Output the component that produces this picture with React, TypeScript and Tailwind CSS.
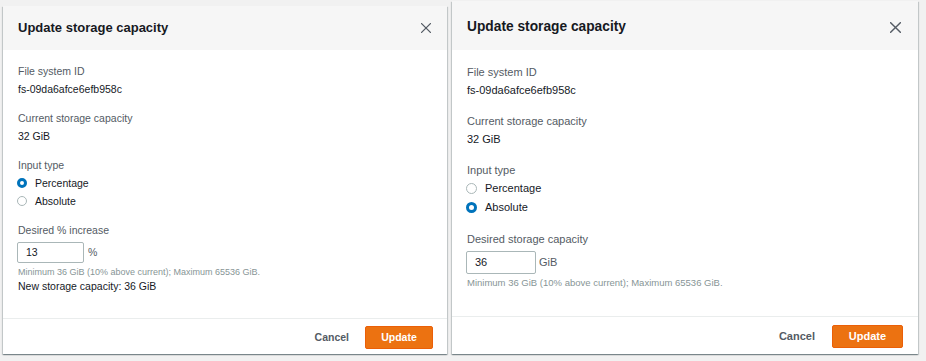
import React from "react";

type Cfg = {
  panel: string;
  header: string;
  title: string;
  close: number;
  body: string;
  line: string;
  radioLine: string;
  gap: string;
  radio: string;
  radioOn: string;
  radioGap: string;
  input: string;
  unit: string;
  hint: string;
  extra: string;
  footer: string;
  cancel: string;
  update: string;
};

const L: Cfg = {
  panel: "mt-[6px] w-[444px] h-[348px]",
  header: "h-[44px] pl-[15px] pr-[16px]",
  title: "text-[13px]",
  close: 10,
  body: "pl-[14px] pt-[12px] text-[10.5px]",
  line: "h-[18px] leading-[18px]",
  radioLine: "h-[18px] leading-[18px]",
  gap: "mt-[11px]",
  radio: "w-[10px] h-[10px]",
  radioOn: "border-[3px]",
  radioGap: "gap-[8px]",
  input: "w-[67px] h-[21px] pl-[8px]",
  unit: "ml-[4px]",
  hint: "mt-[3px] h-[12px] leading-[12px] text-[9px]",
  extra: "h-[16px] leading-[16px] text-[10.5px]",
  footer: "h-[36px] pt-[7px] pr-[14px] gap-[16px]",
  cancel: "text-[10.5px]",
  update: "w-[68px] h-[23px] text-[10.5px]",
};

const R: Cfg = {
  panel: "mt-[1px] w-[466px] h-[353px]",
  header: "h-[49px] pt-[3px] pl-[15px] pr-[17px]",
  title: "text-[13.75px]",
  close: 11,
  body: "pl-[14px] pt-[13px] text-[11px]",
  line: "h-[18px] leading-[18px]",
  radioLine: "h-[19px] leading-[19px]",
  gap: "mt-[13px]",
  radio: "w-[11px] h-[11px]",
  radioOn: "border-[3.5px]",
  radioGap: "gap-[8px]",
  input: "w-[70px] h-[23px] pl-[8px]",
  unit: "ml-[3px]",
  hint: "mt-[3px] h-[12px] leading-[12px] text-[9.5px]",
  extra: "",
  footer: "h-[38px] pt-[8px] pr-[15px] gap-[17px]",
  cancel: "text-[11px]",
  update: "w-[71px] h-[23px] text-[11px]",
};

function CloseIcon({ size }: { size: number }) {
  return (
    <svg width={size} height={size} viewBox="0 0 10 10" fill="none">
      <path d="M0.6 0.6 L9.4 9.4 M9.4 0.6 L0.6 9.4" stroke="#545b64" strokeWidth="1.3" strokeLinecap="round" />
    </svg>
  );
}

function Radio({ c, on, label }: { c: Cfg; on: boolean; label: string }) {
  return (
    <div className={`flex items-center ${c.radioGap} ${c.radioLine}`}>
      <span
        className={`${c.radio} rounded-full box-border ${
          on ? `${c.radioOn} border-[#0073bb] bg-white` : "border border-[#aab7b8] bg-white"
        }`}
      />
      <span className="text-[#16191f]">{label}</span>
    </div>
  );
}

function Panel({ c, pct }: { c: Cfg; pct: boolean }) {
  return (
    <div
      className={`${c.panel} flex flex-col bg-white shadow-[0_1px_1px_0_rgba(0,28,36,0.3),1px_1px_1px_0_rgba(0,28,36,0.15),-1px_1px_1px_0_rgba(0,28,36,0.15)]`}
    >
      <div className={`${c.header} flex items-center justify-between bg-[#f6f6f6]`}>
        <span className={`${c.title} font-bold text-[#16191f]`}>Update storage capacity</span>
        <CloseIcon size={c.close} />
      </div>
      <div className={`flex-1 flex flex-col ${c.body}`}>
        <div className={`${c.line} pl-[1px] text-[#545b64]`}>File system ID</div>
        <div className={`${c.line} pl-[1px] text-[#16191f]`}>fs-09da6afce6efb958c</div>
        <div className={`${c.gap} ${c.line} pl-[1px] text-[#545b64]`}>Current storage capacity</div>
        <div className={`${c.line} pl-[1px] text-[#16191f]`}>32 GiB</div>
        <div className={`${c.gap} ${c.line} pl-[1px] text-[#545b64]`}>Input type</div>
        <Radio c={c} on={pct} label="Percentage" />
        <Radio c={c} on={!pct} label="Absolute" />
        <div className={`${c.gap} ${c.line} pl-[1px] text-[#545b64]`}>
          {pct ? "Desired % increase" : "Desired storage capacity"}
        </div>
        <div className="mt-[3px] flex items-center">
          <div
            className={`${c.input} flex items-center border border-[#aab7b8] rounded-[2px] text-[#16191f] bg-white`}
          >
            {pct ? "13" : "36"}
          </div>
          <span className={`${c.unit} text-[#545b64]`}>{pct ? "%" : "GiB"}</span>
        </div>
        <div className={`${c.hint} pl-[1px] text-[#879596]`}>
          Minimum 36 GiB (10% above current); Maximum 65536 GiB.
        </div>
        {pct && (
          <div className={`${c.extra} pl-[1px] text-[#16191f]`}>New storage capacity: 36 GiB</div>
        )}
      </div>
      <div className={`${c.footer} flex items-start justify-end border-t border-[#eaeded]`}>
        <span className={`${c.cancel} font-bold text-[#545b64] h-[23px] flex items-center`}>Cancel</span>
        <button
          className={`${c.update} flex items-center justify-center font-bold text-white bg-[#ec7211] border border-[#eb5f07] rounded-[2px]`}
        >
          Update
        </button>
      </div>
    </div>
  );
}

export default function App() {
  return (
    <div
      className="w-[926px] h-[361px] bg-[#f1f1f1] flex items-start pl-[3px] gap-[5px] overflow-hidden"
      style={{ fontFamily: '"Liberation Sans", Arial, sans-serif' }}
    >
      <Panel c={L} pct={true} />
      <Panel c={R} pct={false} />
    </div>
  );
}
